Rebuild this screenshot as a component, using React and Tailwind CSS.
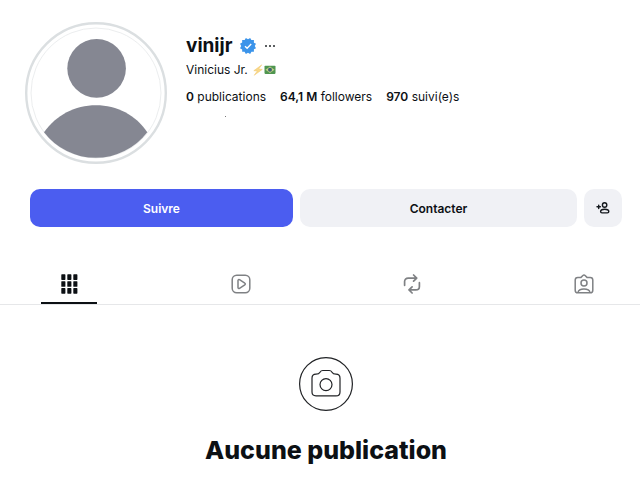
import React from 'react';

function Avatar() {
  return (
    <svg viewBox="0 0 142 142" className="size-[142px] shrink-0" role="img" aria-label="vinijr">
      <circle cx="71" cy="71" r="69.8" fill="#fff" stroke="#dbdfe1" strokeWidth="2.4" />
      <circle cx="71" cy="71" r="65" fill="none" stroke="#e6e8ea" strokeWidth="0.8" />
      <circle cx="71.6" cy="46.4" r="29.3" fill="#858792" />
      <path d="M19 110.3C31 93 50 83.2 71 83.2S111 93 122.3 110.3A65 65 0 0 1 19 110.3Z" fill="#858792" />
    </svg>
  );
}

function Verified() {
  return (
    <svg viewBox="0 0 40 40" className="size-4" role="img" aria-label="Vérifié">
      <path
        fill="#3b94ea"
        d="M19.998 3.094 14.638 0l-2.972 5.150H5.432v6.354L0 14.640 3.094 20 0 25.359l5.432 3.137v5.905h5.975L14.638 40l5.360-3.094L25.358 40l3.232-5.600h6.162v-6.010L40 25.359 36.905 20 40 14.641l-5.248-3.030v-6.460h-6.419L25.358 0l-5.360 3.094Z"
      />
      <path d="m12.5 20.5 5.3 5.3L28 15" fill="none" stroke="#fff" strokeWidth="3.4" />
    </svg>
  );
}

function Bolt() {
  return (
    <svg viewBox="0 0 12 12" className="size-3" role="img" aria-label="éclair">
      <path d="M9.8.8 1.8 6.7l3.5.3L2.2 11.3 10.3 5.4 6.7 5Z" fill="#f9d98a" stroke="#f0c76c" strokeWidth="0.5" />
    </svg>
  );
}

function BrazilFlag() {
  return (
    <svg viewBox="0 0 12 12" className="size-3" role="img" aria-label="Brésil">
      <rect x="0.5" y="1.7" width="11" height="8.2" rx="0.8" fill="#4f9650" />
      <path d="m6 2.5 4.5 3.3L6 9.1 1.5 5.8Z" fill="#c4cf86" />
      <circle cx="6" cy="5.8" r="2" fill="#3c6573" />
    </svg>
  );
}

function AddPerson() {
  return (
    <svg viewBox="0 0 14 14" className="size-3.5" fill="none" stroke="#15191e" strokeWidth="1.4" strokeLinecap="round" aria-hidden="true">
      <path d="M1 5.8h3.4M2.700 4.100v3.400" />
      <circle cx="8.600" cy="4" r="2.200" />
      <path d="M8.700 8.300c-2.400 0-4.100 1-4.100 2.300 0 .9.600 1.300 1.400 1.300h5.400c.8 0 1.400-.4 1.400-1.300 0-1.300-1.700-2.300-4.100-2.300Z" />
    </svg>
  );
}

function GridIcon() {
  const columns = [2.3, 8.3, 14.3];
  const rows = [0.3, 7.2, 14.1];
  return (
    <svg viewBox="0 0 20 20" className="size-5" fill="#0c1014" aria-hidden="true">
      {rows.map((y) => columns.map((x) => <rect key={`${x}-${y}`} x={x} y={y} width="4.1" height="5.6" rx="0.6" />))}
    </svg>
  );
}

function ReelsIcon() {
  return (
    <svg viewBox="0 0 20 20" className="size-5" fill="none" stroke="#7f8184" strokeWidth="1.5" strokeLinejoin="round" aria-hidden="true">
      <rect x="1.2" y="1.2" width="17.6" height="17.6" rx="4.5" />
      <path d="M7 6.5c0-.9.800-1.300 1.500-.9l5.300 3.500c.7.400.7 1.300 0 1.700l-5.300 3.500c-.7.400-1.500 0-1.500-.9Z" />
    </svg>
  );
}

function RepostIcon() {
  return (
    <svg viewBox="0 0 20 20" className="size-5" fill="none" stroke="#7f8184" strokeWidth="1.7" strokeLinecap="round" strokeLinejoin="round" aria-hidden="true">
      <path d="m11.600 1 3.100 3.100-3.100 3.100M14.400 4.100H6.200c-2.200 0-3.600 1.300-3.600 3.500v3.700" />
      <path d="m10.100 19-3.100-3.100 3.100-3.100M7.300 15.900h6.500c2.200 0 3.600-1.300 3.600-3.500V8.700" />
    </svg>
  );
}

function TaggedIcon() {
  return (
    <svg viewBox="0 0 20 20" className="size-5" fill="none" stroke="#7f8184" strokeWidth="1.5" strokeLinejoin="round" aria-hidden="true">
      <path d="M7 3.400 8.900 1.500c.7-.7 1.500-.7 2.200 0L13 3.400h3.200c1.600 0 2.600 1 2.600 2.600v10.200c0 1.600-1 2.600-2.600 2.600H3.800c-1.600 0-2.600-1-2.600-2.600V6c0-1.600 1-2.600 2.600-2.600Z" />
      <circle cx="10" cy="9" r="3" />
      <path d="M4 18.600c.4-2.200 2.700-3.500 6-3.500s5.600 1.300 6 3.500" />
    </svg>
  );
}

function CameraIcon() {
  return (
    <svg viewBox="0 0 54 54" className="size-[54px]" fill="none" stroke="#202225" strokeWidth="1.2" aria-hidden="true">
      <circle cx="27" cy="27" r="26.4" />
      <path d="M17 17.200c2.500 0 3.200-.5 4-2 .7-1.200 1.500-1.700 2.800-1.700h6.400c1.300 0 2.100.5 2.800 1.700.8 1.500 1.500 2 4 2 2.700 0 4 1.300 4 4v13.700c0 2.700-1.300 4-4 4H17c-2.700 0-4-1.300-4-4V21.200c0-2.700 1.300-4 4-4Z" />
      <circle cx="27" cy="27.6" r="6" />
    </svg>
  );
}

const stats = [
  { value: '0', label: 'publications' },
  { value: '64,1 M', label: 'followers' },
  { value: '970', label: 'suivi(e)s' },
];

const tabs = [
  { name: 'Publications', Icon: GridIcon, active: true },
  { name: 'Reels', Icon: ReelsIcon },
  { name: 'Republications', Icon: RepostIcon },
  { name: 'Identifié(e)', Icon: TaggedIcon },
];

export default function App() {
  return (
    <main className="min-h-screen bg-white pt-[22px] font-['Inter',sans-serif] text-xs text-[#0c1014]">
      <header className="flex gap-[19px] pl-[25px]">
        <Avatar />
        <div className="pt-3">
          <div className="flex items-center gap-2">
            <h1 className="text-[19px] leading-6 font-bold">vinijr</h1>
            <Verified />
            <button type="button" aria-label="Options" className="flex gap-[2px] p-px">
              <span className="size-[2px] rounded-full bg-[#25282c]" />
              <span className="size-[2px] rounded-full bg-[#25282c]" />
              <span className="size-[2px] rounded-full bg-[#25282c]" />
            </button>
          </div>
          <p className="mt-1 flex items-center">
            <span className="mr-1">Vinicius Jr.</span>
            <Bolt />
            <BrazilFlag />
          </p>
          <ul className="mt-[11px] flex gap-3.5">
            {stats.map(({ value, label }) => (
              <li key={label}>
                <span className="font-semibold">{value}</span> {label}
              </li>
            ))}
          </ul>
          <div className="mt-[11px] ml-[39px] size-px bg-[#777]" />
        </div>
      </header>

      <div className="mt-[25px] flex gap-[7px] pr-[18px] pl-[30px] font-semibold">
        <button type="button" className="h-[38px] flex-[263] rounded-[10px] bg-[#4b5df0] pt-px text-white">Suivre</button>
        <button type="button" className="h-[38px] flex-[277] rounded-[10px] bg-[#f0f1f5] pt-px">Contacter</button>
        <button type="button" aria-label="Suggestions" className="flex size-[38px] items-center justify-center rounded-[10px] bg-[#f0f1f5]">
          <AddPerson />
        </button>
      </div>

      <nav className="mt-[37px] flex justify-between border-b border-[#e6e7e9] pr-7 pl-[41px]">
        {tabs.map(({ name, Icon, active }) => (
          <a
            key={name}
            href="#"
            aria-label={name}
            className={`flex h-10 w-14 justify-center border-b-2 pt-[10px] ${active ? 'border-[#0c1014]' : 'border-transparent'}`}
          >
            <Icon />
          </a>
        ))}
      </nav>

      <section className="flex flex-col items-center pt-[52px] pr-[18px] pl-[30px]">
        <CameraIcon />
        <h2 className="mt-[23px] text-[25px] leading-8 font-extrabold">Aucune publication</h2>
      </section>
    </main>
  );
}
